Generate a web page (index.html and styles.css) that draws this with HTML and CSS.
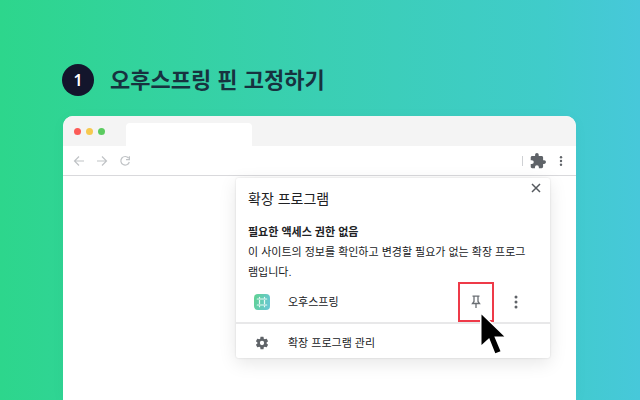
FILE: index.html
```
<!DOCTYPE html>
<html lang="ko">
<head>
    <meta charset="UTF-8">
    <title>오후스프링 핀 고정하기</title>
    <link rel="stylesheet" href="styles.css">
</head>
<body>
    <div class="step">
        <span class="step-number">1</span>
        <h1>오후스프링 핀 고정하기</h1>
    </div>

    <div class="browser">
        <div class="tab-bar">
            <div class="lights">
                <span class="light red"></span>
                <span class="light yellow"></span>
                <span class="light green"></span>
            </div>
            <div class="tab"></div>
        </div>

        <div class="toolbar">
            <button class="nav-btn" aria-label="뒤로">
                <svg width="12" height="12" viewBox="0 0 12 12"><path d="M11 6H2M6 1.5L1.5 6L6 10.5"/></svg>
            </button>
            <button class="nav-btn" aria-label="앞으로">
                <svg width="12" height="12" viewBox="0 0 12 12"><path d="M1 6H10M6 1.5L10.5 6L6 10.5"/></svg>
            </button>
            <button class="nav-btn" aria-label="새로고침">
                <svg width="12" height="12" viewBox="0 0 12 12"><path d="M9.6 3.2A4.3 4.3 0 1 0 10.3 7M10.4 1.2V4.6H7"/></svg>
            </button>
            <div class="tools">
                <button class="puzzle-btn" aria-label="확장 프로그램">
                    <svg width="16" height="16" viewBox="1 1 22 22"><path d="M20.5 11H19V7c0-1.1-.9-2-2-2h-4V3.5a2.5 2.5 0 0 0-5 0V5H4c-1.1 0-2 .9-2 2v3.8h1.5a2.7 2.7 0 0 1 0 5.4H2V20c0 1.1.9 2 2 2h3.8v-1.5a2.7 2.7 0 0 1 5.4 0V22H17c1.1 0 2-.9 2-2v-4h1.5a2.5 2.5 0 0 0 0-5z"/></svg>
                </button>
                <button class="menu-btn" aria-label="메뉴">
                    <svg width="4" height="10" viewBox="0 0 4 10"><circle cx="2" cy="1.3" r="1.2"/><circle cx="2" cy="5" r="1.2"/><circle cx="2" cy="8.7" r="1.2"/></svg>
                </button>
            </div>
        </div>

        <div class="page">
            <div class="popup">
                <button class="close-btn" aria-label="닫기">
                    <svg width="10" height="10" viewBox="0 0 10 10"><path d="M1 1L9 9M9 1L1 9"/></svg>
                </button>
                <div class="info">
                    <h2>확장 프로그램</h2>
                    <h3>필요한 액세스 권한 없음</h3>
                    <p>이 사이트의 정보를 확인하고 변경할 필요가 없는 확장 프로그<br>램입니다.</p>
                </div>
                <div class="row">
                    <svg class="icon" width="16" height="16" viewBox="0 0 16 16">
                        <defs>
                            <linearGradient id="logo" x1="0" y1="0" x2="1" y2="0.3">
                                <stop offset="0" stop-color="#5fd290"/>
                                <stop offset="1" stop-color="#68c8d0"/>
                            </linearGradient>
                        </defs>
                        <rect width="16" height="16" rx="4" fill="url(#logo)"/>
                        <path d="M5.5 3.3V4.2M5.500 6V10M5.5 11.800V12.700M10.5 3.3V4.2M10.5 6V10M10.5 11.800V12.700M3.300 5H4.600M6.400 5H9.600M11.400 5H12.700M3.300 11H4.600M6.400 11H9.600M11.400 11H12.700" fill="none" stroke="#e9faf5" stroke-width="1.2" stroke-linecap="round"/>
                    </svg>
                    <span class="name">오후스프링</span>
                    <button class="pin-btn" aria-label="고정">
                        <svg width="10" height="14" viewBox="0 0 10 14"><path d="M1.5 1.2H8.5M3 1.2V6.5L1.5 8.5H8.5L7 6.5V1.2M5 8.5V13"/></svg>
                    </button>
                    <button class="more-btn" aria-label="더보기">
                        <svg width="4" height="14" viewBox="0 0 4 14"><circle cx="2" cy="2" r="1.5"/><circle cx="2" cy="7" r="1.5"/><circle cx="2" cy="12" r="1.5"/></svg>
                    </button>
                    <svg class="cursor" width="28" height="44" viewBox="0 0 28 44">
                        <path d="M2.5 2.5V33L10.2 26L16.3 41.3L21.5 39.3L15.3 24.5L25.3 24.5Z" fill="#fff" stroke="#fff" stroke-width="3"/>
                        <path d="M2.5 2.5V33L10.2 26L16.3 41.3L21.5 39.3L15.3 24.5L25.3 24.5Z" fill="#000"/>
                    </svg>
                </div>
                <div class="row manage">
                    <svg class="icon" width="16" height="16" viewBox="-1 -1 26 26"><path fill="#5f6368" d="M19.43 12.98c.04-.32.07-.64.07-.98s-.03-.66-.07-.98l2.11-1.65c.19-.15.24-.42.12-.64l-2-3.46c-.12-.22-.39-.3-.61-.22l-2.49 1c-.52-.4-1.08-.73-1.69-.98l-.38-2.65A.49.49 0 0 0 14 2h-4c-.25 0-.46.18-.49.42l-.38 2.65c-.61.25-1.17.59-1.69.98l-2.49-1c-.23-.09-.49 0-.61.22l-2 3.46c-.13.22-.07.49.12.64l2.11 1.65c-.04.32-.07.65-.07.98s.03.66.07.98l-2.11 1.65c-.19.15-.24.42-.12.64l2 3.46c.12.22.39.3.61.22l2.49-1c.52.4 1.08.73 1.69.98l.38 2.65c.03.24.24.42.49.42h4c.25 0 .46-.18.49-.42l.38-2.65c.61-.25 1.17-.59 1.69-.98l2.49 1c.23.09.49 0 .61-.22l2-3.46c.12-.22.07-.49-.12-.64l-2.11-1.65zM12 15.5a3.5 3.5 0 1 1 0-7 3.5 3.5 0 0 1 0 7z"/></svg>
                    <a href="#" class="name">확장 프로그램 관리</a>
                </div>
            </div>
        </div>
    </div>
</body>
</html>
```
FILE: styles.css
```
* {
    box-sizing: border-box;
}
body {
    display: flex;
    flex-direction: column;
    min-height: 100vh;
    margin: 0;
    padding: 64px 64px 0 62px;
    background: linear-gradient(90deg, #2dd68c 0%, #3acfb3 50%, #40ccca 85%, #47c8da 100%);
    font-family: "Liberation Sans", "Noto Sans CJK KR", sans-serif;
    color: #202124;
}
h1, h2, h3, p {
    margin: 0;
}
button {
    display: flex;
    align-items: center;
    justify-content: center;
    padding: 0;
    border: none;
    background: none;
    cursor: pointer;
}
svg {
    display: block;
    flex-shrink: 0;
}
.step {
    display: flex;
    align-items: center;
    gap: 16px;
    margin-bottom: 20px;
}
.step-number {
    width: 32px;
    height: 32px;
    border-radius: 50%;
    background-color: #13152c;
    color: #fff;
    font-family: "Noto Sans", sans-serif;
    font-size: 16px;
    font-weight: 600;
    line-height: 32px;
    text-align: center;
}
.step h1 {
    padding-bottom: 4px;
    font-family: "Noto Sans CJK KR", sans-serif;
    font-size: 22px;
    font-weight: 700;
    line-height: 28px;
    color: #17323f;
}
.browser {
    display: flex;
    flex-direction: column;
    flex-grow: 1;
    margin-left: 1px;
    border-radius: 10px 10px 0 0;
    background-color: #fff;
    box-shadow: 0 2px 16px rgba(0, 0, 0, 0.03);
}
.tab-bar {
    display: flex;
    align-items: flex-end;
    gap: 20px;
    height: 30px;
    padding-left: 11px;
    border-radius: 10px 10px 0 0;
    background-color: #f4f4f4;
}
.lights {
    display: flex;
    align-self: center;
    gap: 5px;
    padding-right: 1px;
}
.light {
    width: 7px;
    height: 7px;
    border-radius: 50%;
}
.red {
    background-color: #fc5b57;
}
.yellow {
    background-color: #f6c94f;
}
.green {
    background-color: #5bcb60;
}
.tab {
    width: 126px;
    height: 23px;
    border-radius: 4px 4px 0 0;
    background-color: #fff;
}
.toolbar {
    display: flex;
    align-items: center;
    gap: 11px;
    height: 30px;
    padding: 0 13px 0 10px;
    border-bottom: 1px solid #d9d9dc;
}
.nav-btn svg {
    fill: none;
    stroke: #c0c3c6;
    stroke-width: 1.2;
}
.tools {
    display: flex;
    align-items: center;
    gap: 13px;
    margin-left: auto;
}
.puzzle-btn {
    height: 10px;
    padding-left: 7px;
    border-left: 1px solid #cfd1d4;
}
.puzzle-btn svg,
.menu-btn svg,
.more-btn svg {
    fill: #5f6368;
}
.page {
    position: relative;
    flex-grow: 1;
}
/* extensions menu hanging from the puzzle button */
.popup {
    position: absolute;
    top: 2px;
    right: 26px;
    width: 314px;
    border-radius: 2px;
    background-color: #fff;
    box-shadow: 0 0 2px rgba(0, 0, 0, 0.15), 0 5px 18px rgba(0, 0, 0, 0.1);
}
.close-btn {
    position: absolute;
    top: 5px;
    right: 9px;
}
.close-btn svg {
    fill: none;
    stroke: #55595e;
    stroke-width: 1.5;
}
.info {
    padding: 11px 12px 0;
}
.info h2 {
    margin-bottom: 13px;
    font-size: 14px;
    font-weight: 400;
    line-height: 20px;
}
.info h3,
.info p {
    font-size: 11px;
    line-height: 20px;
    white-space: nowrap;
}
.row {
    position: relative;
    display: flex;
    align-items: center;
    height: 40px;
    padding: 0 24px 0 18px;
}
.name {
    margin-left: 18px;
    font-size: 11px;
    line-height: 20px;
    color: #202124;
    text-decoration: none;
}
.pin-btn {
    width: 36px;
    height: 40px;
    margin-left: auto;
    border: 2px solid #ee3a48;
}
.pin-btn svg {
    fill: none;
    stroke: #6b6f74;
    stroke-width: 1.3;
}
.more-btn {
    width: 20px;
    margin-left: 12px;
}
.cursor {
    position: absolute;
    top: 30px;
    right: 43px;
    z-index: 1;
}
.manage {
    height: 36px;
    padding-top: 4px;
    border-top: 2px solid #e8e8e9;
}
```
